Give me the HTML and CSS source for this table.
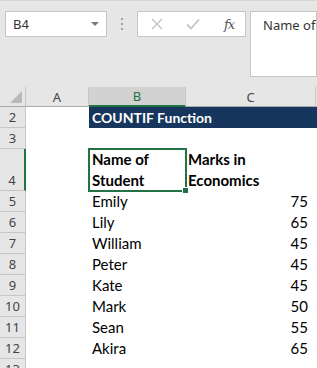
FILE: index.html
```html
<!DOCTYPE html>
<html lang="en">
<head>
<meta charset="utf-8">
<title>COUNTIF Function</title>
<link rel="stylesheet" href="styles.css">
</head>
<body>
<div class="app">
  <div class="formula-bar">
    <div class="namebox">
      <span class="namebox-ref">B4</span>
      <svg class="namebox-arrow" width="8" height="4" viewBox="0 0 8 4"><path d="M0 0H8L4 4Z" fill="#7a7a7a"/></svg>
    </div>
    <div class="grip"><i></i><i></i><i></i></div>
    <div class="fx-buttons">
      <svg class="btn-icon" width="12" height="12" viewBox="0 0 12 12"><path d="M1 1L11 11M11 1L1 11" stroke="#c4c4c4" stroke-width="1.4" fill="none"/></svg>
      <svg class="btn-icon" width="14" height="12" viewBox="0 0 14 12"><path d="M1 6.5L5 10.5L13 1.5" stroke="#c4c4c4" stroke-width="1.8" fill="none"/></svg>
      <span class="fx-label">fx</span>
    </div>
    <div class="formula-input">Name of</div>
  </div>

  <div class="sheet">
    <!-- column headers -->
    <div class="corner"><span class="corner-tri"></span></div>
    <div class="colhead">A</div>
    <div class="colhead selected">B</div>
    <div class="colhead">C</div>
    <div class="colhead last"></div>

    <!-- row 2: title band across B:D -->
    <div class="rowhead">2</div>
    <div class="cell"></div>
    <div class="cell title">COUNTIF Function</div>

    <!-- row 3 -->
    <div class="rowhead">3</div>
    <div class="cell"></div>
    <div class="cell"></div>
    <div class="cell"></div>
    <div class="cell"></div>

    <!-- row 4 -->
    <div class="rowhead active">4</div>
    <div class="cell"></div>
    <div class="cell head active-cell">Name of<br>Student<span class="fill-handle"></span></div>
    <div class="cell head">Marks in<br>Economics</div>
    <div class="cell"></div>

    <div class="rowhead">5</div><div class="cell"></div><div class="cell">Emily</div><div class="cell num">75</div><div class="cell"></div>
    <div class="rowhead">6</div><div class="cell"></div><div class="cell">Lily</div><div class="cell num">65</div><div class="cell"></div>
    <div class="rowhead">7</div><div class="cell"></div><div class="cell">William</div><div class="cell num">45</div><div class="cell"></div>
    <div class="rowhead">8</div><div class="cell"></div><div class="cell">Peter</div><div class="cell num">45</div><div class="cell"></div>
    <div class="rowhead">9</div><div class="cell"></div><div class="cell">Kate</div><div class="cell num">45</div><div class="cell"></div>
    <div class="rowhead">10</div><div class="cell"></div><div class="cell">Mark</div><div class="cell num">50</div><div class="cell"></div>
    <div class="rowhead">11</div><div class="cell"></div><div class="cell">Sean</div><div class="cell num">55</div><div class="cell"></div>
    <div class="rowhead">12</div><div class="cell"></div><div class="cell">Akira</div><div class="cell num">65</div><div class="cell"></div>
    <div class="rowhead">13</div><div class="cell"></div><div class="cell"></div><div class="cell"></div><div class="cell"></div>
  </div>
</div>
</body>
</html>
```

FILE: styles.css
```css
html, body {
  margin: 0;
  padding: 0;
  background: #ffffff;
  overflow: hidden;
}

.app {
  width: 317px;
  height: 368px;
  overflow: hidden;
  font-family: Lato, "Liberation Sans", sans-serif;
}

/* ---------- formula bar ---------- */
.formula-bar {
  height: 87px;
  box-sizing: border-box;
  background: #e6e6e6;
  border-top: 1px solid #d6d6d6;
  padding-top: 10px;
  display: flex;
  align-items: flex-start;
}

.namebox {
  margin-left: 5px;
  width: 102px;
  height: 26px;
  box-sizing: border-box;
  background: #ffffff;
  border: 1px solid #c6c6c6;
  display: flex;
  align-items: center;
  padding: 0 7px 0 7px;
  font-family: "Noto Sans", sans-serif;
  font-size: 13px;
  color: #333333;
}

.namebox-ref {
  flex: 1;
}

.grip {
  width: 30px;
  height: 26px;
  display: flex;
  flex-direction: column;
  align-items: center;
  justify-content: center;
  gap: 3px;
}

.grip i {
  display: block;
  width: 2px;
  height: 2px;
  background: #a0a0a0;
}

.fx-buttons {
  width: 109px;
  height: 26px;
  box-sizing: border-box;
  background: #ffffff;
  border: 1px solid #c6c6c6;
  display: flex;
  align-items: center;
  padding-left: 13px;
  gap: 23px;
}

.fx-label {
  font-family: "DejaVu Serif", "Liberation Serif", serif;
  font-style: italic;
  font-size: 13px;
  color: #555555;
  letter-spacing: -1px;
  margin-left: 1px;
}

.formula-input {
  margin-left: 4px;
  width: 67px;
  height: 66px;
  box-sizing: border-box;
  background: #ffffff;
  border: 1px solid #c6c6c6;
  padding: 4px 0 0 12px;
  font-family: "Noto Sans", sans-serif;
  font-size: 13px;
  color: #333333;
  white-space: nowrap;
  overflow: hidden;
}

/* ---------- worksheet ---------- */
.sheet {
  display: grid;
  grid-template-columns: 26px 63px 97px 130px 1fr;
  grid-template-rows: 20px 21px 21px 42px repeat(9, 21px);
  font-size: 15px;
  color: #000000;
}

.corner,
.colhead,
.rowhead {
  background: #e6e6e6;
  box-sizing: border-box;
  font-family: "Noto Sans", sans-serif;
  font-size: 13px;
  color: #444444;
}

.corner {
  position: relative;
  border-right: 1px solid #c6c6c6;
  border-bottom: 1px solid #a8a8a8;
}

.corner-tri {
  position: absolute;
  right: 3px;
  bottom: 3px;
  width: 0;
  height: 0;
  border-left: 12px solid transparent;
  border-bottom: 12px solid #b9b9b9;
}

.colhead {
  display: flex;
  align-items: center;
  justify-content: center;
  border-right: 1px solid #c6c6c6;
  border-bottom: 1px solid #a8a8a8;
}

.colhead.selected {
  background: #d2d2d2;
  color: #217346;
  border-bottom: 2px solid #217346;
}

.colhead.last {
  border-right: none;
}

.rowhead {
  display: flex;
  align-items: flex-end;
  justify-content: center;
  padding-bottom: 1px;
  border-right: 1px solid #c6c6c6;
  border-bottom: 1px solid #c6c6c6;
}

.rowhead.active {
  border-right: 2px solid #217346;
}

.cell {
  display: flex;
  align-items: flex-end;
  padding: 0 3px 1px 3px;
  line-height: 20px;
  white-space: nowrap;
  background: #ffffff;
}

.cell.title {
  grid-column: span 3;
  background: #17365d;
  color: #ffffff;
  font-weight: 700;
  font-size: 14px;
  align-items: center;
  padding-bottom: 0;
}

.cell.head {
  font-weight: 700;
  line-height: 21px;
  padding-bottom: 0;
  padding-left: 2px;
}

.cell.num {
  justify-content: flex-end;
  padding-right: 8px;
}

/* active cell outline drawn over the neighbouring gridlines */
.active-cell {
  position: relative;
  padding-left: 3px !important;
}

.active-cell::after {
  content: "";
  position: absolute;
  left: -1px;
  top: -1px;
  right: -1px;
  bottom: -1px;
  border: 2px solid #217346;
  pointer-events: none;
}

.fill-handle {
  position: absolute;
  right: -3px;
  bottom: -3px;
  width: 5px;
  height: 5px;
  background: #217346;
  border: 1px solid #ffffff;
  z-index: 1;
}
```
